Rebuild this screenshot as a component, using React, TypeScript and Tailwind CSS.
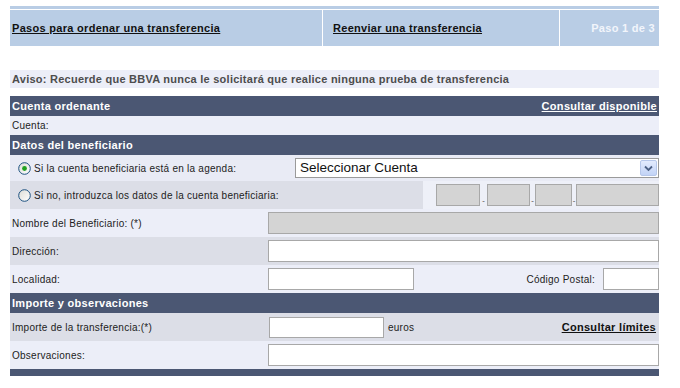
import React from "react";

const F = { fontFamily: '"Liberation Sans", Arial, sans-serif' };
const S = { fontFamily: '"Liberation Sans", Arial, sans-serif' };

function Radio({ checked }: { checked?: boolean }) {
  return (
    <svg width="13" height="13" viewBox="0 0 13 13" className="shrink-0">
      <defs>
        <linearGradient id={checked ? "rg1" : "rg2"} x1="0" y1="0" x2="1" y2="1">
          <stop offset="0" stopColor="#dcdcd6" />
          <stop offset="1" stopColor="#ffffff" />
        </linearGradient>
      </defs>
      <circle cx="6.5" cy="6.5" r="5.8" fill={`url(#${checked ? "rg1" : "rg2"})`} stroke="#1c5180" strokeWidth="1" />
      {checked && <circle cx="6.5" cy="6.5" r="2.4" fill="#21a121" />}
    </svg>
  );
}

function Header({ title, link }: { title: string; link?: string }) {
  return (
    <div className="flex h-[20px] items-center justify-between bg-[#4b5773] px-[2px] text-[11px] font-bold tracking-[0.3px] text-white" style={F}>
      <span>{title}</span>
      {link && <span className="underline">{link}</span>}
    </div>
  );
}

const lbl = "text-[10px] tracking-[0.25px] text-[#222]";

export default function App() {
  return (
    <div className="w-[680px] h-[388px] bg-white pt-[6px]">
      <div className="ml-[10px] w-[649px]">
        {/* top band */}
        <div className="h-[3px] bg-[#b9cde5]" />
        <div className="h-[1px] bg-white" />
        <div className="flex h-[36px] text-[11px] font-bold tracking-[0.3px]" style={F}>
          <div className="flex w-[312px] items-center bg-[#b9cde5] pl-[2px] text-[#111] underline">Pasos para ordenar una transferencia</div>
          <div className="w-[1px] bg-white" />
          <div className="flex w-[236px] items-center bg-[#b9cde5] pl-[10px] text-[#111] underline">Reenviar una transferencia</div>
          <div className="w-[1px] bg-white" />
          <div className="flex flex-1 items-center justify-end bg-[#b9cde5] pr-[4px] text-[#f2f5fb]">Paso 1 de 3</div>
        </div>

        <div className="mt-[24px] flex h-[18px] items-center bg-[#eceef8] pl-[2px] text-[11px] font-bold tracking-[0.25px] text-[#4d4d4d]" style={F}>
          Aviso: Recuerde que BBVA nunca le solicitará que realice ninguna prueba de transferencia
        </div>

        <div className="mt-[8px]">
          <Header title="Cuenta ordenante" link="Consultar disponible" />
          <div className={`flex h-[19px] items-center bg-[#eceef8] pl-[2px] ${lbl}`} style={S}>Cuenta:</div>
          <Header title="Datos del beneficiario" />

          {/* radio row 1 */}
          <div className="flex h-[26px] items-center bg-[#e9ebf5]">
            <div className={`flex w-[284px] items-center gap-[3px] pl-[8px] ${lbl}`} style={S}>
              <Radio checked />
              <span>Si la cuenta beneficiaria está en la agenda:</span>
            </div>
            <div className="ml-auto flex h-[20px] w-[364px] items-center border border-[#9a9a9a] bg-white pl-[4px] text-[13.5px] text-[#111]" style={F}>
              <span className="flex-1">Seleccionar Cuenta</span>
              <div className="mr-[1px] flex h-[16px] w-[17px] items-center justify-center rounded-[2px] border border-[#b6c7ea] bg-gradient-to-b from-[#e3ebfd] to-[#c2d3f6]">
                <svg width="9" height="7" viewBox="0 0 9 7">
                  <path d="M1 1.5 L4.5 5 L8 1.5" fill="none" stroke="#4d6185" strokeWidth="1.8" />
                </svg>
              </div>
            </div>
          </div>

          {/* radio row 2 */}
          <div className="flex h-[28px]">
            <div className={`flex w-[413px] items-center gap-[3px] bg-[#dcdee7] pl-[8px] ${lbl}`} style={S}>
              <Radio />
              <span>Si no, introduzca los datos de la cuenta beneficiaria:</span>
            </div>
            <div className="flex flex-1 items-center bg-[#eef0f8] pl-[13px]">
              <div className="h-[22px] w-[44px] border border-[#a8a8a8] bg-[#d4d4d4]" />
              <span className="mt-[12px] w-[7px] text-center text-[8px] text-[#666]">-</span>
              <div className="h-[22px] w-[43px] border border-[#a8a8a8] bg-[#d4d4d4]" />
              <span className="mt-[12px] w-[5px] text-center text-[8px] text-[#666]">-</span>
              <div className="h-[22px] w-[37px] border border-[#a8a8a8] bg-[#d4d4d4]" />
              <span className="mt-[12px] w-[4px] text-center text-[8px] text-[#666]">-</span>
              <div className="h-[22px] flex-1 border border-[#a8a8a8] bg-[#d4d4d4]" />
            </div>
          </div>

          {/* Nombre */}
          <div className="flex h-[28px] items-center bg-[#eceef8]">
            <div className={`w-[256px] pl-[2px] ${lbl}`} style={S}>Nombre del Beneficiario: (*)</div>
            <div className="ml-[2px] h-[22px] flex-1 border border-[#a8a8a8] bg-[#d4d4d4]" />
          </div>

          {/* Direccion */}
          <div className="flex h-[28px] items-center bg-[#dcdee7]">
            <div className={`w-[256px] pl-[2px] ${lbl}`} style={S}>Dirección:</div>
            <div className="ml-[2px] h-[22px] flex-1 border border-[#a8a8a8] bg-white" />
          </div>

          {/* Localidad */}
          <div className="flex h-[28px] items-center bg-[#eceef8]">
            <div className={`w-[256px] pl-[2px] ${lbl}`} style={S}>Localidad:</div>
            <div className="ml-[2px] h-[22px] w-[146px] border border-[#a8a8a8] bg-white" />
            <div className={`ml-auto mr-[8px] ${lbl}`} style={S}>Código Postal:</div>
            <div className="h-[22px] w-[56px] border border-[#a8a8a8] bg-white" />
          </div>

          <Header title="Importe y observaciones" />

          {/* Importe */}
          <div className="flex h-[28px] items-center bg-[#dcdee7]">
            <div className={`w-[256px] pl-[2px] ${lbl}`} style={S}>Importe de la transferencia:(*)</div>
            <div className="ml-[3px] h-[21px] w-[115px] border border-[#a8a8a8] bg-white" />
            <div className={`ml-[4px] ${lbl}`} style={S}>euros</div>
            <div className="ml-auto mr-[3px] text-[11px] font-bold tracking-[0.3px] text-[#111] underline" style={F}>Consultar límites</div>
          </div>

          {/* Observaciones */}
          <div className="flex h-[28px] items-center bg-[#eceef8]">
            <div className={`w-[256px] pl-[2px] ${lbl}`} style={S}>Observaciones:</div>
            <div className="ml-[2px] h-[22px] flex-1 border border-[#a8a8a8] bg-white" />
          </div>

          <div className="h-[7px] bg-[#4b5773]" />
        </div>
      </div>
    </div>
  );
}
